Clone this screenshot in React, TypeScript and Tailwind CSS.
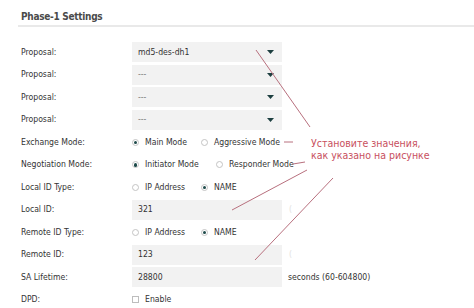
import React from "react";

const font = "font-['DejaVu_Sans_Condensed','DejaVu_Sans',sans-serif]";

function Row({ label, children }: { label: string; children: React.ReactNode }) {
  return (
    <div className="flex h-[22.5px] items-center">
      <div className="w-[111px] text-[8.6px] leading-none text-[#333]">{label}</div>
      <div className="flex items-center">{children}</div>
    </div>
  );
}

function Select({ value }: { value: string }) {
  return (
    <div className="flex h-[20px] w-[150px] items-center justify-between bg-[#f2f2f2] pl-[6px] pr-[8px]">
      <span className={`text-[8.6px] leading-none ${value === "---" ? "text-[#777]" : "text-[#333]"}`}>{value}</span>
      <svg width="7" height="4" viewBox="0 0 7 4">
        <polygon points="0,0 7,0 3.5,4" fill="#1d3f40" />
      </svg>
    </div>
  );
}

function Input({ value }: { value: string }) {
  return (
    <div className="flex h-[20px] w-[150px] items-center bg-[#f2f2f2] pl-[6px]">
      <span className="text-[8.6px] leading-none text-[#333]">{value}</span>
    </div>
  );
}

function Radio({ checked, label, className = "" }: { checked?: boolean; label: string; className?: string }) {
  return (
    <div className={`flex items-center ${className}`}>
      <span className="flex h-[7px] w-[7px] items-center justify-center rounded-full border border-[#c4c4c4] bg-white">
        {checked && <span className="h-[3.5px] w-[3.5px] rounded-full bg-[#1d4a4a]" />}
      </span>
      <span className="ml-[6px] text-[8.6px] leading-none text-[#333]">{label}</span>
    </div>
  );
}

export default function App() {
  return (
    <div className={`relative h-[308px] w-[474px] overflow-hidden bg-white ${font}`}>
      <div className="ml-[18px] pt-[10px]">
        <div className="border-b-2 border-[#e9e9e9] pb-[1px] pl-[3px] text-[10px] font-bold leading-[14px] tracking-[-0.3px] text-[#4a4a4a]">
          Phase-1 Settings
        </div>
      </div>
      <div className="ml-[21px] mt-[14px] flex flex-col">
        <Row label="Proposal:"><Select value="md5-des-dh1" /></Row>
        <Row label="Proposal:"><Select value="---" /></Row>
        <Row label="Proposal:"><Select value="---" /></Row>
        <Row label="Proposal:"><Select value="---" /></Row>
        <Row label="Exchange Mode:">
          <Radio checked label="Main Mode" className="w-[69px]" />
          <Radio label="Aggressive Mode" />
        </Row>
        <Row label="Negotiation Mode:">
          <Radio checked label="Initiator Mode" className="w-[84px]" />
          <Radio label="Responder Mode" />
        </Row>
        <Row label="Local ID Type:">
          <Radio label="IP Address" className="w-[69px]" />
          <Radio checked label="NAME" />
        </Row>
        <Row label="Local ID:">
          <Input value="321" />
          <span className="ml-[7px] text-[8.6px] leading-none text-[#e2e2e2]">(</span>
        </Row>
        <Row label="Remote ID Type:">
          <Radio label="IP Address" className="w-[69px]" />
          <Radio checked label="NAME" />
        </Row>
        <Row label="Remote ID:">
          <Input value="123" />
          <span className="ml-[7px] text-[8.6px] leading-none text-[#e2e2e2]">(</span>
        </Row>
        <Row label="SA Lifetime:">
          <Input value="28800" />
          <span className="ml-[6px] text-[8.6px] leading-none text-[#333]">seconds (60-604800)</span>
        </Row>
        <Row label="DPD:">
          <div className="flex items-center">
            <span className="h-[7px] w-[7px] border border-[#bdbdbd] bg-white" />
            <span className="ml-[6px] text-[8.6px] leading-none text-[#333]">Enable</span>
          </div>
        </Row>
      </div>

      <svg className="pointer-events-none absolute left-0 top-0" width="474" height="308" viewBox="0 0 474 308">
        <g stroke="#b8707e" strokeWidth="1" fill="none">
          <line x1="256" y1="50" x2="310" y2="127" />
          <line x1="284" y1="142" x2="293" y2="142" />
          <line x1="293" y1="164" x2="305" y2="162" />
          <line x1="307" y1="170" x2="232" y2="210" />
          <line x1="333" y1="178" x2="255" y2="260" />
        </g>
      </svg>
      <div className="absolute left-[311px] top-[137px] text-[10.5px] leading-[12px] text-[#c8505e]">
        <div>Установите значения,</div>
        <div>как указано на рисунке</div>
      </div>
    </div>
  );
}
